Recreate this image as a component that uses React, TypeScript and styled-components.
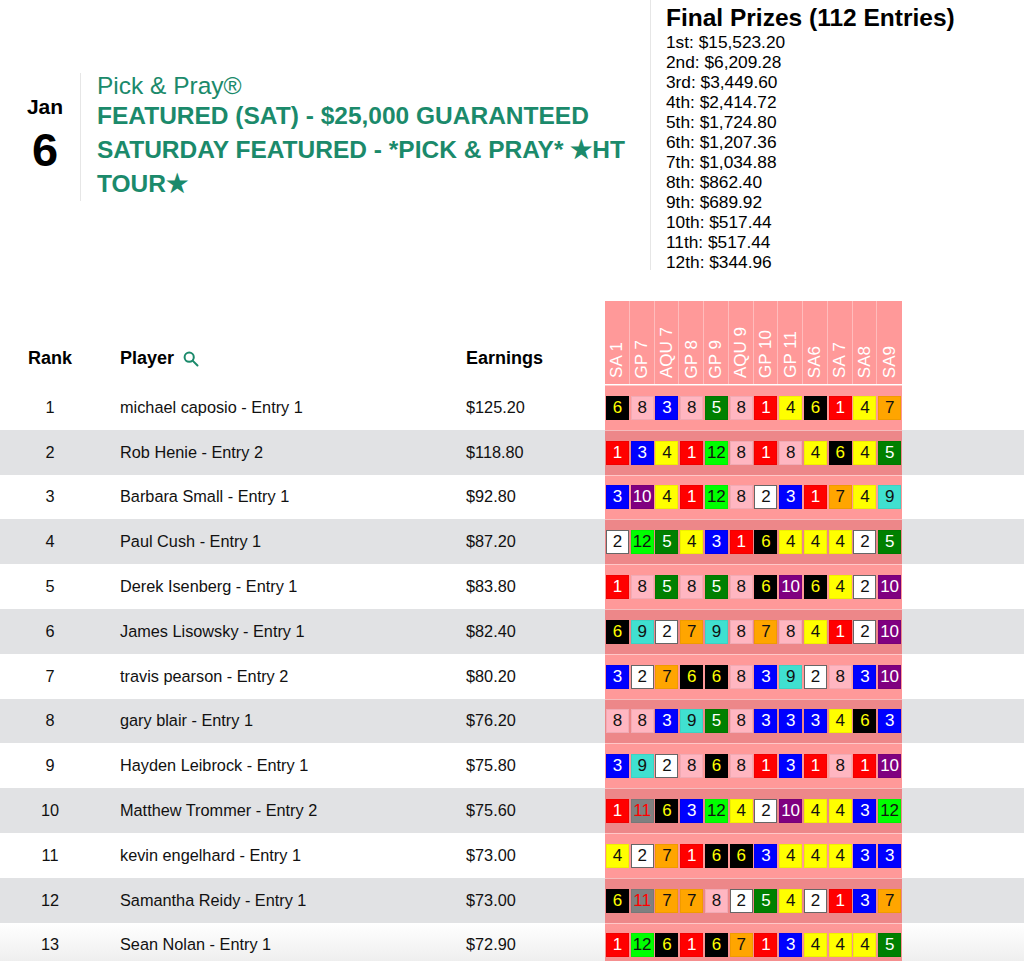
import styled, { createGlobalStyle } from 'styled-components';

const GlobalStyle = createGlobalStyle`
    body {
        margin: 0;
        font-family: "Liberation Sans", Arial, sans-serif;
        color: #111;
        background: #fff;
    }
`;

const GREEN = '#1b8a6b';

const prizes = [
    '1st: $15,523.20',
    '2nd: $6,209.28',
    '3rd: $3,449.60',
    '4th: $2,414.72',
    '5th: $1,724.80',
    '6th: $1,207.36',
    '7th: $1,034.88',
    '8th: $862.40',
    '9th: $689.92',
    '10th: $517.44',
    '11th: $517.44',
    '12th: $344.96',
];

const races = ['SA 1', 'GP 7', 'AQU 7', 'GP 8', 'GP 9', 'AQU 9', 'GP 10', 'GP 11', 'SA6', 'SA 7', 'SA8', 'SA9'];

const players = [
    { name: 'michael caposio - Entry 1', earnings: '$125.20', picks: [6, 8, 3, 8, 5, 8, 1, 4, 6, 1, 4, 7] },
    { name: 'Rob Henie - Entry 2', earnings: '$118.80', picks: [1, 3, 4, 1, 12, 8, 1, 8, 4, 6, 4, 5] },
    { name: 'Barbara Small - Entry 1', earnings: '$92.80', picks: [3, 10, 4, 1, 12, 8, 2, 3, 1, 7, 4, 9] },
    { name: 'Paul Cush - Entry 1', earnings: '$87.20', picks: [2, 12, 5, 4, 3, 1, 6, 4, 4, 4, 2, 5] },
    { name: 'Derek Isenberg - Entry 1', earnings: '$83.80', picks: [1, 8, 5, 8, 5, 8, 6, 10, 6, 4, 2, 10] },
    { name: 'James Lisowsky - Entry 1', earnings: '$82.40', picks: [6, 9, 2, 7, 9, 8, 7, 8, 4, 1, 2, 10] },
    { name: 'travis pearson - Entry 2', earnings: '$80.20', picks: [3, 2, 7, 6, 6, 8, 3, 9, 2, 8, 3, 10] },
    { name: 'gary blair - Entry 1', earnings: '$76.20', picks: [8, 8, 3, 9, 5, 8, 3, 3, 3, 4, 6, 3] },
    { name: 'Hayden Leibrock - Entry 1', earnings: '$75.80', picks: [3, 9, 2, 8, 6, 8, 1, 3, 1, 8, 1, 10] },
    { name: 'Matthew Trommer - Entry 2', earnings: '$75.60', picks: [1, 11, 6, 3, 12, 4, 2, 10, 4, 4, 3, 12] },
    { name: 'kevin engelhard - Entry 1', earnings: '$73.00', picks: [4, 2, 7, 1, 6, 6, 3, 4, 4, 4, 3, 3] },
    { name: 'Samantha Reidy - Entry 1', earnings: '$73.00', picks: [6, 11, 7, 7, 8, 2, 5, 4, 2, 1, 3, 7] },
    { name: 'Sean Nolan - Entry 1', earnings: '$72.90', picks: [1, 12, 6, 1, 6, 7, 1, 3, 4, 4, 4, 5] },
];

// saddle cloth colours by program number
const cloth: Record<number, { bg: string; fg: string; border?: string }> = {
    1: { bg: '#ff0000', fg: '#fff' },
    2: { bg: '#fff', fg: '#111', border: '#666' },
    3: { bg: '#0000ff', fg: '#fff' },
    4: { bg: '#ffff00', fg: '#111' },
    5: { bg: '#008000', fg: '#fff' },
    6: { bg: '#000', fg: '#ffff00' },
    7: { bg: '#ffa500', fg: '#111' },
    8: { bg: '#ffb6c1', fg: '#111' },
    9: { bg: '#40e0d0', fg: '#111' },
    10: { bg: '#800080', fg: '#fff' },
    11: { bg: '#808080', fg: '#ff0000' },
    12: { bg: '#00ff00', fg: '#111' },
};

const App = () => {
    return (
        <Page>
            <GlobalStyle />
            <TopSection>
                <EventInfo>
                    <DateBox>
                        <Month>Jan</Month>
                        <Day>6</Day>
                    </DateBox>
                    <TitleBlock>
                        <Brand>Pick &amp; Pray®</Brand>
                        <Headline>FEATURED (SAT) - $25,000 GUARANTEED SATURDAY FEATURED - *PICK &amp; PRAY* ★HT TOUR★</Headline>
                    </TitleBlock>
                </EventInfo>
                <PrizePanel>
                    <PrizeTitle>Final Prizes (112 Entries)</PrizeTitle>
                    {prizes.map((p) => (
                        <PrizeLine key={p}>{p}</PrizeLine>
                    ))}
                </PrizePanel>
            </TopSection>

            <Table>
                <HeaderRow>
                    <HeadCell $center>Rank</HeadCell>
                    <HeadCell>
                        Player
                        <SearchIcon viewBox="0 0 16 16">
                            <circle cx="6.2" cy="6.2" r="4.6" />
                            <line x1="9.6" y1="9.6" x2="14.5" y2="14.5" />
                        </SearchIcon>
                    </HeadCell>
                    <HeadCell>Earnings</HeadCell>
                    <RaceHeader>
                        {races.map((r) => (
                            <RaceLabel key={r}>
                                <span>{r}</span>
                            </RaceLabel>
                        ))}
                    </RaceHeader>
                    <div />
                </HeaderRow>
                {players.map((p, i) => (
                    <Row key={p.name} $striped={i % 2 === 1} $fade={i === players.length - 1}>
                        <RankCell>{i + 1}</RankCell>
                        <TextCell>{p.name}</TextCell>
                        <TextCell>{p.earnings}</TextCell>
                        <PickStrip>
                            {p.picks.map((n, j) => (
                                <Pick key={j} $n={n}>{n}</Pick>
                            ))}
                        </PickStrip>
                        <div />
                    </Row>
                ))}
            </Table>
        </Page>
    );
};

const Page = styled.div`
    width: 1024px;
`;

const TopSection = styled.div`
    display: flex;
    align-items: flex-start;
`;

const EventInfo = styled.div`
    width: 650px;
    display: flex;
    margin-top: 73px;
`;

const DateBox = styled.div`
    width: 70px;
    margin-left: 10px;
    border-right: 1px solid #e6e6e6;
    display: flex;
    flex-direction: column;
    align-items: center;
    justify-content: center;
    padding-bottom: 4px;
    color: #000;
`;

const Month = styled.div`
    font-size: 21px;
    font-weight: 700;
    line-height: 22px;
    margin-bottom: 7px;
`;

const Day = styled.div`
    font-size: 47px;
    font-weight: 700;
    line-height: 50px;
`;

const TitleBlock = styled.div`
    padding-left: 16px;
    padding-right: 10px;
    flex: 1;
    color: ${GREEN};
`;

const Brand = styled.div`
    font-size: 24.5px;
    line-height: 26px;
`;

const Headline = styled.div`
    font-size: 24.5px;
    font-weight: 700;
    line-height: 34px;
`;

const PrizePanel = styled.div`
    flex: 1;
    height: 270px;
    border-left: 1px solid #e6e6e6;
    padding-left: 15px;
    color: #000;
`;

const PrizeTitle = styled.div`
    margin-top: 3px;
    font-size: 24.5px;
    font-weight: 700;
    line-height: 29px;
`;

const PrizeLine = styled.div`
    font-size: 17.3px;
    line-height: 20px;
`;

const Table = styled.div`
    margin-top: 31px;
`;

const columns = '100px 346px 159px 297px 1fr';

const HeaderRow = styled.div`
    display: grid;
    grid-template-columns: ${columns};
    height: 83px;
    border-bottom: 1px solid #fff;
`;

const HeadCell = styled.div<{ $center?: boolean }>`
    display: flex;
    align-items: center;
    justify-content: ${(p) => (p.$center ? 'center' : 'flex-start')};
    align-self: end;
    padding: 0 0 15px ${(p) => (p.$center ? '0' : '20px')};
    font-size: 18px;
    font-weight: 700;
    line-height: 21px;
    color: #000;
`;

const SearchIcon = styled.svg`
    width: 16px;
    height: 16px;
    margin-left: 9px;
    fill: none;
    stroke: ${GREEN};
    stroke-width: 2;
    stroke-linecap: round;
`;

const RaceHeader = styled.div`
    display: grid;
    grid-template-columns: repeat(12, 1fr);
    background: rgba(255, 0, 0, 0.4);
`;

const RaceLabel = styled.div`
    display: flex;
    align-items: flex-end;
    justify-content: center;
    padding-bottom: 6px;
    border-right: 1px solid rgba(255, 255, 255, 0.35);
    color: #fff;
    font-size: 17px;

    &:last-child {
        border-right: none;
    }

    span {
        writing-mode: vertical-rl;
        transform: rotate(180deg);
        white-space: nowrap;
        line-height: 19px;
    }
`;

const Row = styled.div<{ $striped: boolean; $fade: boolean }>`
    display: grid;
    grid-template-columns: ${columns};
    height: 44.8px;
    align-items: center;
    font-size: 16.3px;
    color: #111;
    background: ${(p) =>
        p.$fade ? 'linear-gradient(to bottom, #fff, #ececec)' : p.$striped ? '#e1e2e4' : '#fff'};
`;

const RankCell = styled.div`
    text-align: center;
`;

const TextCell = styled.div`
    padding-left: 20px;
`;

const PickStrip = styled.div`
    align-self: stretch;
    display: grid;
    grid-template-columns: repeat(12, 1fr);
    align-items: center;
    justify-items: center;
    background: rgba(255, 0, 0, 0.4);
    border-top: 1px solid rgba(255, 255, 255, 0.45);
`;

const Pick = styled.div<{ $n: number }>`
    box-sizing: border-box;
    width: 23px;
    height: 24px;
    line-height: 22px;
    text-align: center;
    font-size: 17px;
    background: ${(p) => cloth[p.$n].bg};
    color: ${(p) => cloth[p.$n].fg};
    border: 1px solid ${(p) => cloth[p.$n].border || 'rgba(0, 0, 0, 0.06)'};
`;

export default App;
